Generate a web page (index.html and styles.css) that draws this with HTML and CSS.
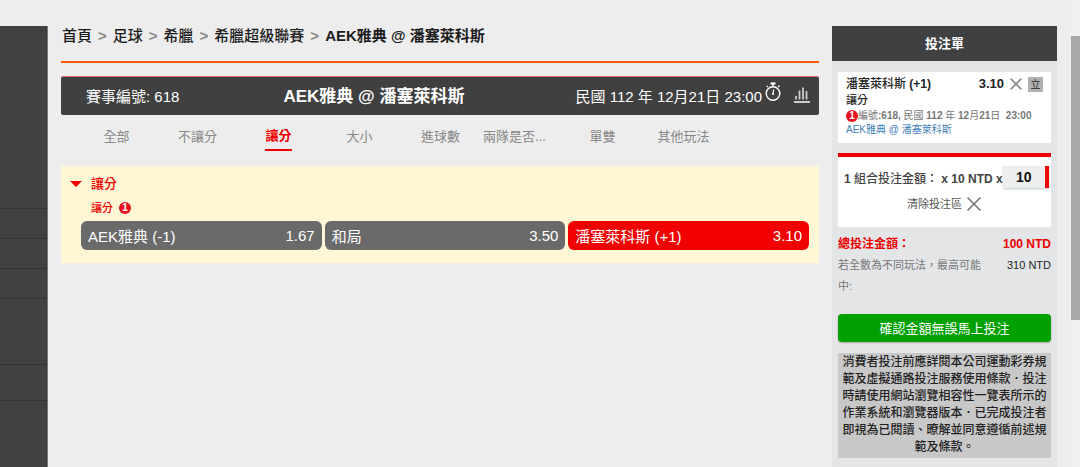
FILE: index.html
```html
<!DOCTYPE html>
<html lang="zh-Hant">
<head>
    <meta charset="UTF-8">
    <meta name="viewport" content="width=device-width, initial-scale=1.0">
    <title>投注單</title>
    <link rel="stylesheet" href="styles.css">
</head>
<body>
    <div class="page">
        <aside class="sidebar">
            <div class="side-block side-first"></div>
            <div class="side-block"></div>
            <div class="side-block"></div>
            <div class="side-block"></div>
            <div class="side-block side-tall"></div>
            <div class="side-block side-mid"></div>
        </aside>

        <main class="main">
            <nav class="breadcrumb">
                <a href="#">首頁</a><span>&gt;</span>
                <a href="#">足球</a><span>&gt;</span>
                <a href="#">希臘</a><span>&gt;</span>
                <a href="#">希臘超級聯賽</a><span>&gt;</span>
                <a href="#" class="current">AEK雅典 @ 潘塞萊科斯</a>
            </nav>

            <header class="match-bar">
                <span class="match-no">賽事編號: 618</span>
                <h1>AEK雅典 @ 潘塞萊科斯</h1>
                <div class="match-time">
                    <span>民國 112 年 12月21日 23:00</span>
                    <svg class="clock" width="16" height="20" viewBox="0 0 16 20" fill="none" stroke="#fff">
                        <circle cx="8" cy="11.5" r="6.8" stroke-width="1.4"/>
                        <path d="M8 4.5V2M13 5l1.5-1.5M3 5L2 4" stroke-width="1.4"/>
                        <path d="M5.5 1.5h5" stroke-width="2.2"/>
                        <path d="M8.6 7.5L8 12" stroke-width="1.2"/>
                        <circle cx="8" cy="12" r="1" fill="#fff" stroke="none"/>
                    </svg>
                    <svg class="chart" width="16" height="18" viewBox="0 0 16 18" fill="none" stroke="#ccc">
                        <path d="M2 13.5V10M5.5 13.5V4.5M9 13.5V1.5M12.5 13.5V5" stroke-width="1.8"/>
                        <path d="M0 16h16" stroke-width="2"/>
                    </svg>
                </div>
            </header>

            <div class="tabs">
                <button type="button" class="tab">全部</button>
                <button type="button" class="tab">不讓分</button>
                <button type="button" class="tab active"><span>讓分</span></button>
                <button type="button" class="tab">大小</button>
                <button type="button" class="tab">進球數</button>
                <button type="button" class="tab long">兩隊是否...</button>
                <button type="button" class="tab">單雙</button>
                <button type="button" class="tab">其他玩法</button>
            </div>

            <section class="market">
                <h2><i class="arrow"></i>讓分</h2>
                <h3>讓分 <span class="badge">1</span></h3>
                <div class="odds">
                    <button type="button" class="odd"><span>AEK雅典 (-1)</span><span>1.67</span></button>
                    <button type="button" class="odd"><span>和局</span><span>3.50</span></button>
                    <button type="button" class="odd selected"><span>潘塞萊科斯 (+1)</span><span>3.10</span></button>
                </div>
            </section>
        </main>

        <aside class="slip">
            <h2 class="slip-title">投注單</h2>
            <div class="slip-body">
                <div class="bet">
                    <div class="bet-top">
                        <span class="bet-name"><span class="medium">潘塞萊科斯</span> (+1)</span>
                        <span class="bet-odd">3.10</span>
                        <button type="button" class="icon-button" aria-label="刪除">
                            <svg width="14" height="14" viewBox="0 0 14 14" stroke="#888" stroke-width="1.6"><path d="M1.5 1.5l11 11M12.5 1.5l-11 11"/></svg>
                        </button>
                        <button type="button" class="banker">立</button>
                    </div>
                    <div class="bet-market">讓分</div>
                    <div class="bet-info"><span class="badge">1</span><span class="light">編號</span>:618, <span class="light">民國</span> 112 <span class="light">年</span> 12<span class="light">月</span>21<span class="light">日</span>&nbsp; 23:00</div>
                    <a href="#" class="bet-match">AEK雅典 @ 潘塞萊科斯</a>
                </div>

                <div class="stake">
                    <div class="stake-row">
                        <label for="amount">1 <span class="medium">組合投注金額：</span> x 10 NTD x</label>
                        <input id="amount" type="text" value="10">
                    </div>
                    <button type="button" class="clear">清除投注區
                        <svg width="16" height="16" viewBox="0 0 16 16" stroke="#777" stroke-width="1.6"><path d="M1.5 1.5l13 13M14.5 1.5l-13 13"/></svg>
                    </button>
                </div>

                <div class="total"><span>總投注金額：</span><span>100 NTD</span></div>
                <div class="payout"><span class="payout-label">若全數為不同玩法，最高可能中:</span><span>310 NTD</span></div>

                <button type="button" class="confirm">確認金額無誤馬上投注</button>

                <p class="notice">消費者投注前應詳閱本公司運動彩券規範及虛擬通路投注服務使用條款．投注時請使用網站瀏覽相容性一覽表所示的作業系統和瀏覽器版本．已完成投注者即視為已閱讀、暸解並同意遵循前述規範及條款。</p>
            </div>
        </aside>

        <div class="scroll"><div class="thumb"></div></div>
    </div>
</body>
</html>
```
FILE: styles.css
```css
* {
    box-sizing: border-box;
}
body {
    margin: 0;
    background: #ededed;
    font-family: "Liberation Sans", "Noto Sans CJK TC", sans-serif;
    font-size: 15px;
    color: #222;
}
button, input {
    font-family: inherit;
    border: none;
    margin: 0;
    padding: 0;
    background: none;
}
button {
    cursor: pointer;
}
h1, h2, h3, p {
    margin: 0;
}
a {
    text-decoration: none;
}
.page {
    display: flex;
    min-height: 100vh;
}
.sidebar {
    width: 48px;
    flex: none;
    margin-top: 26px;
    background: #414142;
    border-right: 1px solid #777;
}
.side-block {
    height: 30px;
    border-bottom: 1px solid #353535;
}
.side-first {
    height: 183px;
}
.side-tall {
    height: 66px;
}
.side-mid {
    height: 36px;
}

/* main column */
.main {
    flex: 1;
    min-width: 0;
    margin: 26px 13px 0;
}
.breadcrumb {
    display: flex;
    gap: 6px;
    height: 37px;
    padding-left: 1px;
    line-height: 20px;
    border-bottom: 2px solid #ff5a0a;
    font-weight: 500;
    white-space: nowrap;
}
.breadcrumb a {
    color: #1c1c1c;
}
.breadcrumb span {
    color: #888;
    font-weight: bold;
}
.breadcrumb .current {
    font-weight: bold;
}
.match-bar {
    display: flex;
    align-items: center;
    height: 39px;
    margin-top: 13px;
    padding: 0 9px 2px 25px;
    background: #404041;
    border-top: 1px solid #d66;
    border-radius: 2px;
    color: #fff;
    white-space: nowrap;
}
.match-no {
    width: 27%;
}
.match-bar h1 {
    padding: 4px 0 0 2px;
    font-size: 17px;
    line-height: 24px;
}
.match-time {
    flex: 1;
    display: flex;
    justify-content: flex-end;
    align-items: center;
}
.clock {
    margin: 0 13px 6px 3px;
}
.tabs {
    display: flex;
    height: 51px;
    padding: 8px 0 0 15px;
}
.tab {
    width: 81px;
    height: 28px;
    font-size: 13px;
    line-height: 26px;
    color: #888;
    white-space: nowrap;
}
.tab.active {
    color: #f00000;
    font-weight: bold;
}
.tab.active span {
    display: inline-block;
    height: 28px;
    border-bottom: 2px solid #f00000;
}
.tab.long {
    padding-right: 14px;
}
.market {
    padding: 7px 10px 13px 20px;
    background: #fff6d5;
    color: #f00000;
}
.market h2 {
    display: flex;
    align-items: center;
    margin-left: -11px;
    font-size: 13px;
    line-height: 22px;
    font-weight: 500;
}
.arrow {
    margin-right: 9px;
    border: 6px solid transparent;
    border-top-color: #f00000;
    border-bottom: none;
}
.market h3 {
    display: flex;
    align-items: center;
    gap: 6px;
    margin: 3px 0 3px 10px;
    font-size: 11px;
    line-height: 20px;
    font-weight: 500;
}
.badge {
    display: inline-block;
    width: 12px;
    height: 12px;
    border-radius: 50%;
    background: #e8131c;
    color: #fff;
    font-size: 10px;
    line-height: 12px;
    font-weight: bold;
    text-align: center;
}
.odds {
    display: flex;
    gap: 3px;
}
.odd {
    flex: 1;
    display: flex;
    justify-content: space-between;
    align-items: center;
    height: 29px;
    padding: 0 7px 1px;
    background: #6a6a6a;
    border-radius: 6px;
    color: #fff;
    font-size: 15px;
}
.odd.selected {
    background: #f00000;
}

/* bet slip */
.slip {
    width: 225px;
    flex: none;
    margin-top: 26px;
    background: #e4e5e7;
}
.slip-title {
    background: #3e4042;
    color: #fff;
    font-size: 13px;
    line-height: 35px;
    text-align: center;
}
.slip-body {
    padding: 11px 6px 0;
}
.medium {
    font-weight: 500;
}
.light {
    font-weight: normal;
}
.bet {
    height: 71px;
    padding: 3px 8px;
    background: #fff;
    white-space: nowrap;
}
.bet-top {
    display: flex;
    align-items: center;
    height: 18px;
    font-size: 12px;
    line-height: 16px;
    font-weight: bold;
}
.bet-name {
    flex: 1;
}
.bet-odd {
    font-size: 13px;
}
.icon-button {
    display: flex;
    margin: 0 5px;
}
.banker {
    width: 15px;
    height: 15px;
    background: #b0b0b0;
    font-size: 10px;
    line-height: 15px;
    color: #222;
}
.bet-market {
    font-size: 11px;
    line-height: 15px;
    font-weight: 500;
}
.bet-info {
    display: flex;
    align-items: center;
    font-size: 10px;
    line-height: 15px;
    font-weight: bold;
    color: #777;
    white-space: pre;
}
.bet-match {
    display: block;
    font-size: 10px;
    line-height: 13px;
    color: #4080b8;
}
.stake {
    height: 74px;
    margin-top: 10px;
    background: #fff;
    border-top: 4px solid #f00000;
}
.stake-row {
    display: flex;
    align-items: center;
    margin-top: 9px;
    padding: 0 2px 0 6px;
    white-space: nowrap;
}
.stake-row label {
    font-size: 12px;
    font-weight: bold;
    color: #444;
}
.stake-row input {
    flex: 1;
    min-width: 0;
    height: 22px;
    background: #eee;
    border-right: 4px solid #f00000;
    box-shadow: 0 1px 2px #b9d0c4;
    font-size: 14px;
    font-weight: bold;
    text-align: center;
    color: #111;
}
.clear {
    display: flex;
    align-items: center;
    gap: 4px;
    margin: 7px auto 0;
    font-size: 11px;
    line-height: 18px;
    color: #555;
}
.total, .payout {
    display: flex;
    justify-content: space-between;
}
.total {
    margin-top: 7px;
    font-size: 12px;
    line-height: 20px;
    font-weight: bold;
    color: #f00000;
}
.payout {
    margin-top: 1px;
    font-size: 11px;
    line-height: 21px;
}
.payout-label {
    width: 145px;
    color: #777;
}
.confirm {
    display: block;
    width: 100%;
    height: 28px;
    margin-top: 17px;
    padding-bottom: 2px;
    background: #00a000;
    border-radius: 4px;
    box-shadow: 0 1px 2px #aaa;
    color: #fff;
    font-size: 13px;
}
.notice {
    margin-top: 11px;
    padding: 1px 4px 2px;
    background: #c8c8c8;
    color: #222;
    font-size: 12px;
    line-height: 17px;
    font-weight: 500;
    text-align: center;
}

/* scroll track */
.scroll {
    width: 9px;
    flex: none;
    margin-left: 14px;
    padding-top: 36px;
    background: #f1f1f1;
}
.thumb {
    height: 284px;
    background: #a8a8a8;
}
```
